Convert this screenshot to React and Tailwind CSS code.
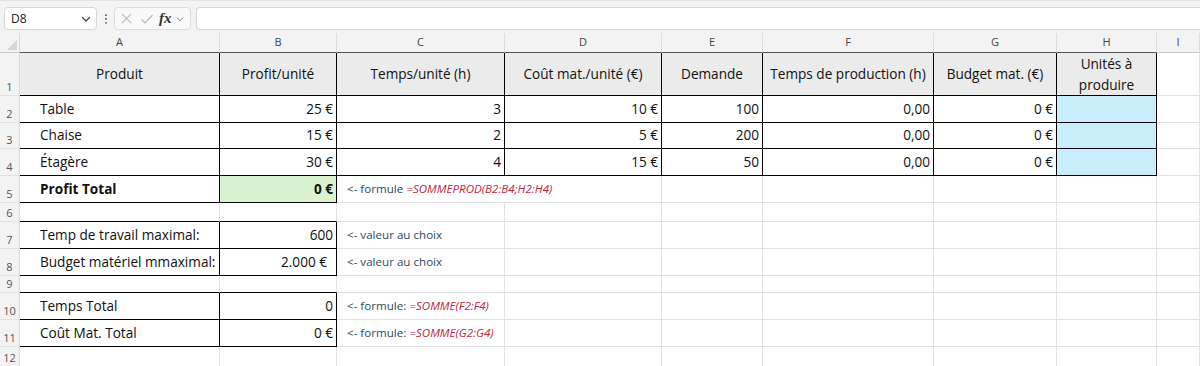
import React from "react";

const COLS = [
  { key: "A", w: "w-[200px]" },
  { key: "B", w: "w-[117px]" },
  { key: "C", w: "w-[168px]" },
  { key: "D", w: "w-[157px]" },
  { key: "E", w: "w-[101px]" },
  { key: "F", w: "w-[171px]" },
  { key: "G", w: "w-[123px]" },
  { key: "H", w: "w-[100px]" },
  { key: "I", w: "flex-1" },
];

const RED = "text-[#c4263c] italic";

function Ann({ pre, formula }) {
  return (
    <span className="text-[11.6px] text-[#2f4a60] whitespace-nowrap pl-[10px]">
      {pre}
      {formula && <span className={RED}>{formula}</span>}
    </span>
  );
}

const T = { rb: true, bb: true };
const rows = [
  {
    n: 1,
    h: "h-[43px]",
    cells: {
      A: { v: "Produit", align: "c", bg: "bg-[#ebebeb]", ...T },
      B: { v: "Profit/unité", align: "c", bg: "bg-[#ebebeb]", ...T },
      C: { v: "Temps/unité (h)", align: "c", bg: "bg-[#ebebeb]", ...T },
      D: { v: "Coût mat./unité (€)", align: "c", bg: "bg-[#ebebeb]", ...T },
      E: { v: "Demande", align: "c", bg: "bg-[#ebebeb]", ...T },
      F: { v: "Temps de production (h)", align: "c", bg: "bg-[#ebebeb]", ...T },
      G: { v: "Budget mat. (€)", align: "c", bg: "bg-[#ebebeb]", ...T },
      H: {
        v: (
          <span className="leading-[21px] text-center">
            Unités à
            <br />
            produire
          </span>
        ),
        align: "c",
        bg: "bg-[#ebebeb]",
        ...T,
      },
    },
  },
  ...[
    ["Table", "25 €", "3", "10 €", "100", "h-[27px]", 2],
    ["Chaise", "15 €", "2", "5 €", "200", "h-[26px]", 3],
    ["Étagère", "30 €", "4", "15 €", "50", "h-[27px]", 4],
  ].map(([a, b, c, d, e, h, n]) => ({
    n,
    h,
    cells: {
      A: { v: a, align: "l", ...T },
      B: { v: b, align: "r", ...T },
      C: { v: c, align: "r", ...T },
      D: { v: d, align: "r", ...T },
      E: { v: e, align: "r", ...T },
      F: { v: "0,00", align: "r", ...T },
      G: { v: "0 €", align: "r", ...T },
      H: { v: "", bg: "bg-[#caedfb]", ...T },
    },
  })),
  {
    n: 5,
    h: "h-[27px]",
    cells: {
      A: { v: "Profit Total", align: "l", bold: true, ...T },
      B: { v: "0 €", align: "r", bold: true, bg: "bg-[#d9f2d0]", ...T },
      C: { v: <Ann pre="<- formule " formula="=SOMMEPROD(B2:B4;H2:H4)" />, align: "ann", hideR: true },
    },
  },
  { n: 6, h: "h-[19px]", cells: { A: { bb: true }, B: { bb: true } } },
  {
    n: 7,
    h: "h-[27px]",
    cells: {
      A: { v: "Temp de travail maximal:", align: "l", ...T },
      B: { v: "600", align: "r", ...T },
      C: { v: <Ann pre="<- valeur au choix" />, align: "ann" },
    },
  },
  {
    n: 8,
    h: "h-[27px]",
    cells: {
      A: { v: "Budget matériel mmaximal:", align: "l", ...T },
      B: { v: "2.000 €", align: "r2", ...T },
      C: { v: <Ann pre="<- valeur au choix" />, align: "ann" },
    },
  },
  { n: 9, h: "h-[17px]", cells: { A: { bb: true }, B: { bb: true } } },
  {
    n: 10,
    h: "h-[27px]",
    cells: {
      A: { v: "Temps Total", align: "l", ...T },
      B: { v: "0", align: "r", ...T },
      C: { v: <Ann pre="<- formule: " formula="=SOMME(F2:F4)" />, align: "ann" },
    },
  },
  {
    n: 11,
    h: "h-[27px]",
    cells: {
      A: { v: "Coût Mat. Total", align: "l", ...T },
      B: { v: "0 €", align: "r", ...T },
      C: { v: <Ann pre="<- formule: " formula="=SOMME(G2:G4)" />, align: "ann" },
    },
  },
  { n: 12, h: "h-[20px]", cells: {} },
];

function Cell({ col, c = {} }) {
  const align =
    c.align === "c"
      ? "justify-center text-center"
      : c.align === "l"
      ? "justify-start pl-[20px]"
      : c.align === "r"
      ? "justify-end pr-[3px]"
      : c.align === "r2"
      ? "justify-end pr-[9px]"
      : "justify-start";
  return (
    <div
      className={[
        col.w,
        "shrink-0 flex items-center relative whitespace-nowrap",
        align,
        c.align === "ann" ? "z-10 overflow-visible" : "overflow-hidden",
        c.bg || "bg-white",
        c.hideR
          ? "border-r border-r-transparent"
          : c.rb
          ? "border-r border-r-black"
          : "border-r border-r-[#e1e1e1]",
        c.bb ? "border-b border-b-black" : "border-b border-b-[#e1e1e1]",
        c.bold ? "font-bold" : "",
      ].join(" ")}
    >
      {c.v}
    </div>
  );
}

function ChevronDown({ className }) {
  return (
    <svg viewBox="0 0 12 12" className={className} fill="none" stroke="currentColor" strokeWidth="1.2">
      <path d="M2.5 4.5 L6 8 L9.5 4.5" strokeLinecap="round" strokeLinejoin="round" />
    </svg>
  );
}

export default function App() {
  return (
    <div
      className="w-[1200px] h-[366px] overflow-hidden bg-white text-[13.6px] text-[#111]"
      style={{ fontFamily: '"Open Sans", "Noto Sans", sans-serif' }}
    >
      {/* toolbar */}
      <div className="h-[33px] bg-[#f3f3f3] border-t border-t-[#e3e3e3] flex items-start pt-[6px] pl-[4px]">
        <div className="w-[93px] h-[23px] bg-white border border-[#d6d6d6] rounded-[4px] flex items-center pl-[6px] pr-[4px] justify-between">
          <span className="text-[12px] text-[#222]">D8</span>
          <ChevronDown className="w-[12px] h-[12px] text-[#444]" />
        </div>
        <div className="w-[17px] h-[23px] flex items-center justify-center">
          <svg viewBox="0 0 4 14" className="w-[4px] h-[12px]" fill="#555">
            <circle cx="2" cy="2.5" r="1.1" />
            <circle cx="2" cy="7" r="1.1" />
            <circle cx="2" cy="11.5" r="1.1" />
          </svg>
        </div>
        <div className="w-[77px] h-[23px] bg-[#f9f9f9] border border-[#dcdcdc] rounded-[4px] flex items-center pl-[5px]">
          <svg viewBox="0 0 14 14" className="w-[13px] h-[13px]" fill="none" stroke="#b5b5b5" strokeWidth="1.1">
            <path d="M2 2 L12 12 M12 2 L2 12" />
          </svg>
          <svg viewBox="0 0 14 14" className="w-[14px] h-[14px] ml-[7px]" fill="none" stroke="#b5b5b5" strokeWidth="1.1">
            <path d="M1.5 7.5 L5 11 L12.5 3" />
          </svg>
          <span
            className="italic font-bold text-[15px] text-[#333] leading-none ml-[5px]"
            style={{ fontFamily: '"Liberation Serif", serif' }}
          >
            fx
          </span>
          <ChevronDown className="w-[10px] h-[10px] text-[#777] ml-[3px]" />
        </div>
        <div className="flex-1 ml-[5px] h-[23px] bg-white border border-[#d6d6d6] rounded-l-[4px] border-r-0" />
      </div>

      {/* column header strip */}
      <div className="flex h-[20px]">
        <div className="w-[20px] shrink-0 bg-[#f3f3f3] border-r border-r-[#d8d8d8] border-b border-b-[#c8c8c8] relative">
          <svg viewBox="0 0 10 10" className="absolute right-[2px] bottom-[2px] w-[10px] h-[10px]">
            <path d="M10 0 L10 10 L0 10 Z" fill="#d6d6d6" />
          </svg>
        </div>
        {COLS.map((col) => (
          <div
            key={col.key}
            className={[
              col.w,
              "shrink-0 bg-[#f3f3f3] flex items-center justify-center text-[11px] text-[#444] border-r border-r-[#dcdcdc] border-b",
              col.key === "I" ? "border-b-[#c8c8c8]" : "border-b-[#555]",
            ].join(" ")}
          >
            {col.key}
          </div>
        ))}
      </div>

      {/* rows */}
      {rows.map((r) => (
        <div key={r.n} className={`flex ${r.h}`}>
          <div className="w-[20px] shrink-0 bg-[#f3f3f3] border-r border-r-[#d8d8d8] border-b border-b-[#e1e1e1] flex items-end justify-center pb-[1px] text-[11px] text-[#555] leading-[14px]">
            {r.n}
          </div>
          {COLS.map((col) => (
            <Cell key={col.key} col={col} c={r.cells[col.key]} />
          ))}
        </div>
      ))}
    </div>
  );
}
